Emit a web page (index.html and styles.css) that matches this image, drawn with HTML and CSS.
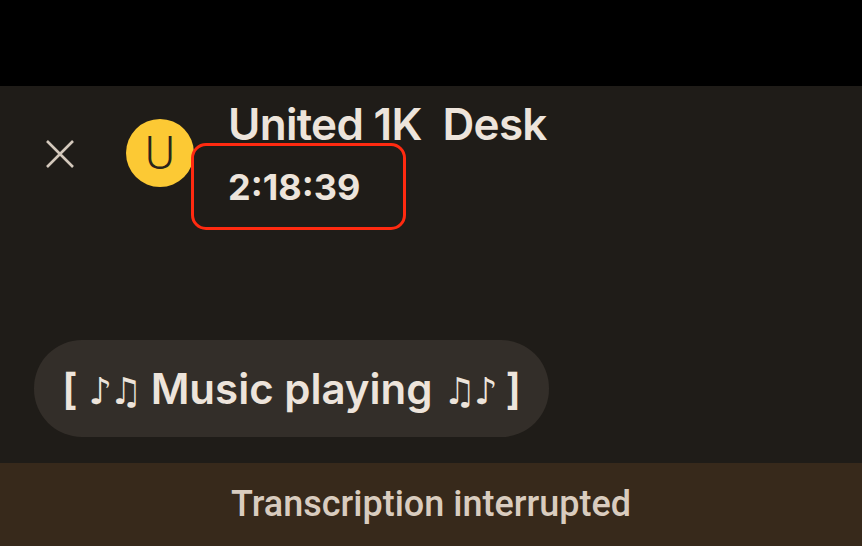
FILE: index.html
```html
<!DOCTYPE html>
<html lang="en">

<head>
    <meta charset="UTF-8">
    <meta name="viewport" content="width=device-width, initial-scale=1.0">
    <title>Live Caption</title>
    <link rel="stylesheet" href="styles.css">
</head>

<body>
    <div class="status-bar"></div>

    <main class="caption-screen">
        <header class="call-header">
            <button class="close-btn" aria-label="Close">
                <svg width="30" height="30" viewBox="0 0 30 30">
                    <path d="M2 2 L28 28 M28 2 L2 28" stroke="#d3c8bb" stroke-width="2.6" fill="none" />
                </svg>
            </button>
            <div class="avatar">U</div>
            <div class="call-info">
                <h1 class="caller">United 1K&nbsp; Desk</h1>
                <div class="timer">2:18:39</div>
            </div>
        </header>

        <section class="captions">
            <div class="bubble">[ <span class="notes">♪♫</span> Music playing <span class="notes">♫♪</span> ]</div>
        </section>
    </main>

    <footer class="notice">Transcription interrupted</footer>
</body>

</html>
```

FILE: styles.css
```css
* {
    box-sizing: border-box;
}

body {
    margin: 0;
    width: 862px;
    height: 546px;
    display: flex;
    flex-direction: column;
    font-family: Inter, Roboto, "DejaVu Sans", sans-serif;
    background-color: #1f1c18;
    color: #ede4db;
    overflow: hidden;
}

.status-bar {
    height: 86px;
    background: #000;
}

.caption-screen {
    flex: 1;
    display: flex;
    flex-direction: column;
}

.call-header {
    display: flex;
    align-items: flex-start;
    padding: 14px 0 0 45px;
}

.close-btn {
    background: none;
    border: none;
    padding: 0;
    margin-top: 39px;
    width: 30px;
    height: 30px;
}

.close-btn svg {
    display: block;
}

.avatar {
    width: 68px;
    height: 68px;
    margin: 19px 0 0 51px;
    border-radius: 50%;
    background: #fcc934;
    color: #2a241a;
    font-size: 46px;
    font-weight: 300;
    font-family: Roboto, sans-serif;
    display: flex;
    align-items: center;
    justify-content: center;
}

.call-info {
    margin-left: 34px;
}

.caller {
    margin: 0;
    font-size: 44px;
    line-height: 48px;
    font-weight: 600;
    letter-spacing: -0.7px;
}

.timer {
    position: relative;
    margin-top: 19px;
    font-size: 36px;
    line-height: 40px;
    font-weight: 700;
}

/* highlight box drawn over the timer */
.timer::after {
    content: "";
    position: absolute;
    left: -37px;
    top: -24px;
    width: 209px;
    height: 81px;
    border: 3px solid #ff2a10;
    border-radius: 15px;
}

.captions {
    padding: 133px 0 0 34px;
}

.bubble {
    display: inline-block;
    height: 97px;
    padding: 0 28px;
    border-radius: 48px;
    background: #332e29;
    font-size: 42px;
    line-height: 97px;
    font-weight: 600;
}

.notes {
    font-size: 37px;
    letter-spacing: -2.5px;
}

.notice {
    height: 83px;
    background: #37291b;
    color: #d9ccbf;
    text-align: center;
    font-size: 36px;
    line-height: 83px;
    font-weight: 500;
    font-family: Roboto, sans-serif;
}
```
